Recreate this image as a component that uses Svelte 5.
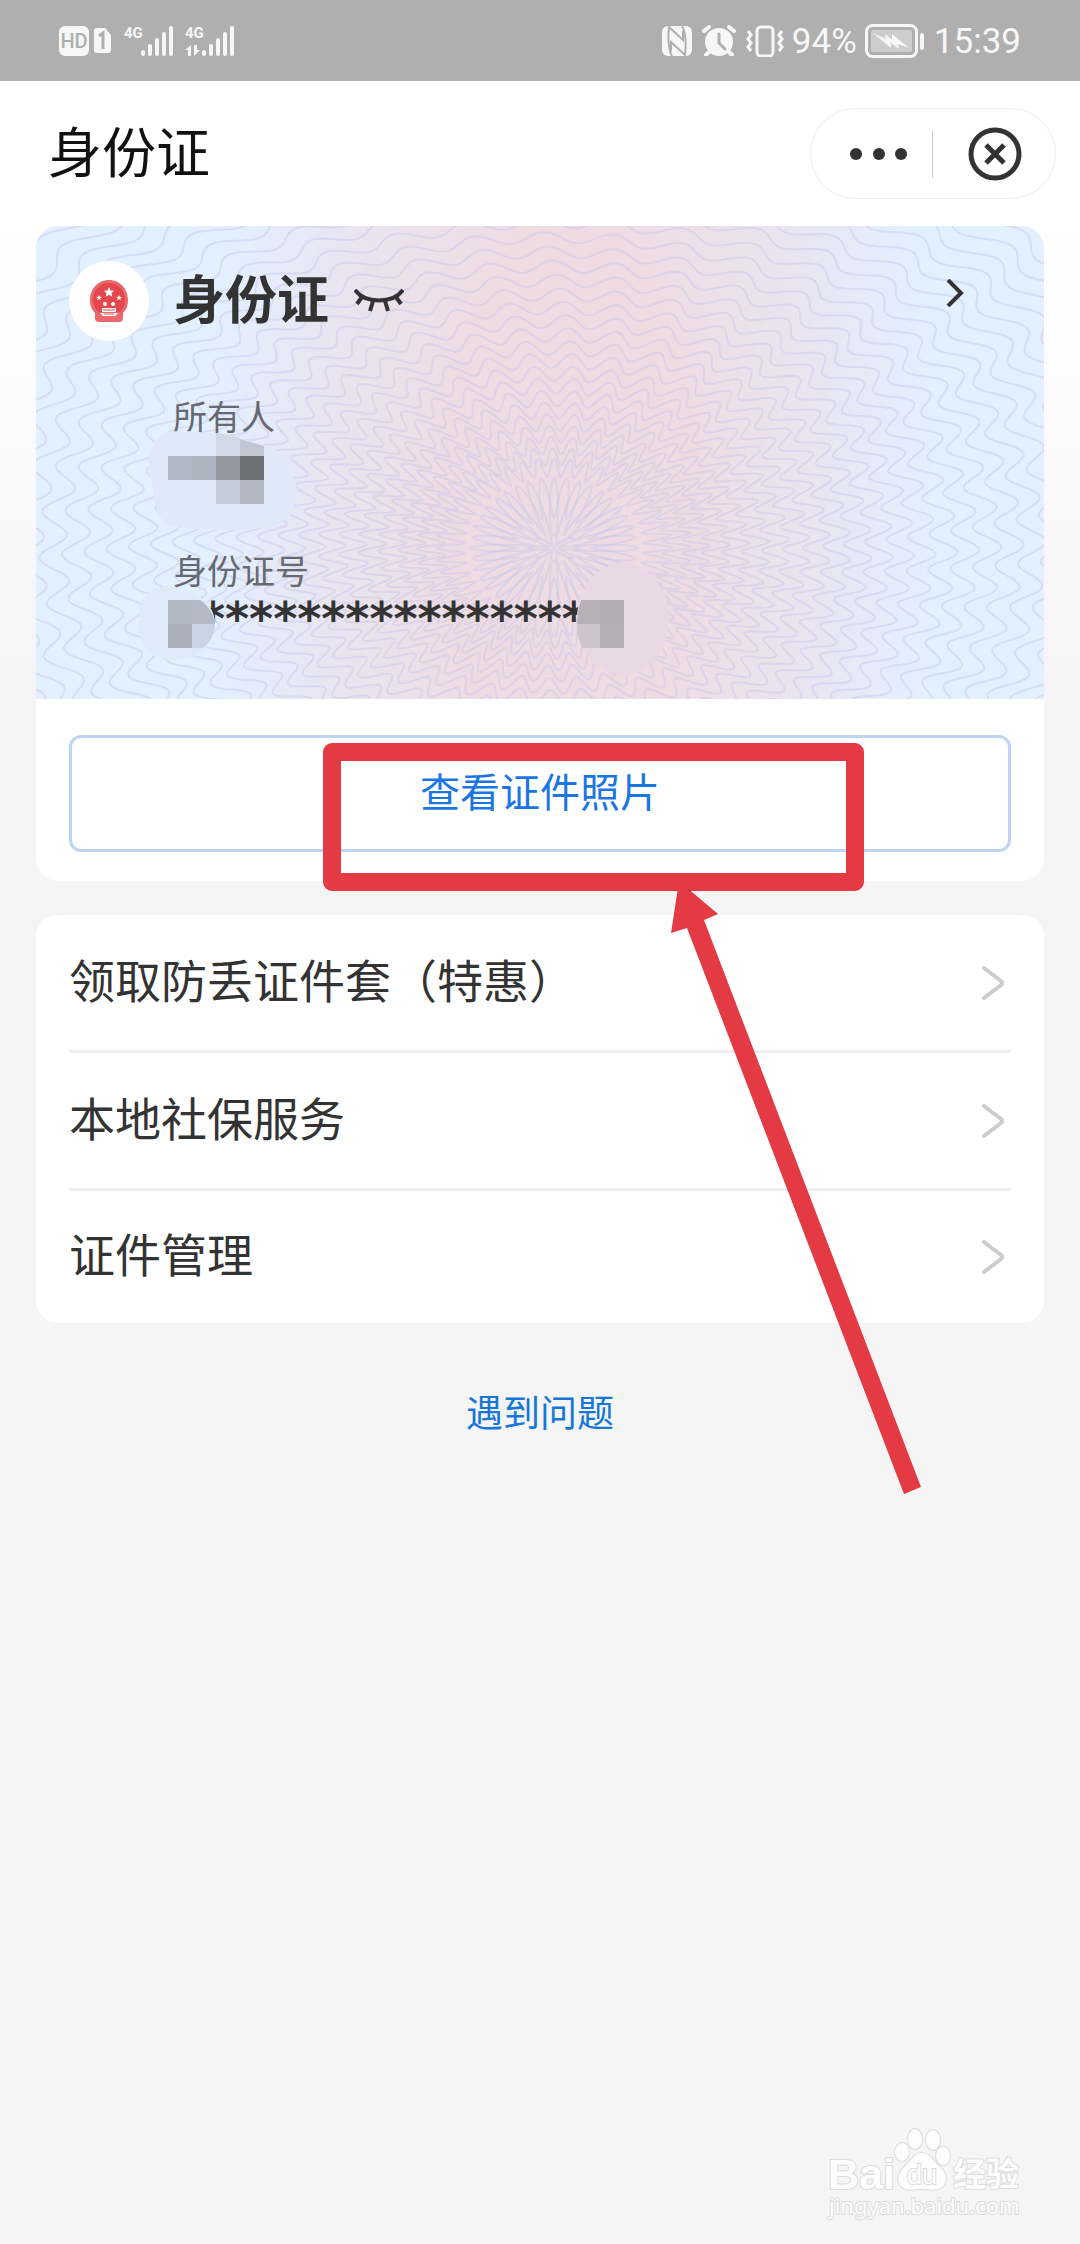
<!--
    App.svelte

    ID card detail screen: status bar, mini-program header, card face,
    service list, and the red pointer drawn over the photo button.
-->
<script lang="ts">
    type Ring = { rx: number; ry: number; ampX: number; ampY: number; waves: number; phase: number };

    const services = ['领取防丢证件套（特惠）', '本地社保服务', '证件管理'];
    const barHeights = [6, 12, 18, 24, 30];
    const maskedId = '*'.repeat(16);

    // One closed wavy line of the guilloche, centred on the rosette.
    function ringPath({ rx, ry, ampX, ampY, waves, phase }: Ring): string {
        const steps = waves * 12;
        let d = '';
        for (let i = 0; i < steps; i++) {
            const t = (i / steps) * Math.PI * 2;
            const wave = Math.cos(waves * t + phase);
            const x = 518 + Math.cos(t) * (rx + ampX * wave);
            const y = 322 + Math.sin(t) * (ry + ampY * wave);
            d += `${i ? 'L' : 'M'}${x.toFixed(1)} ${y.toFixed(1)}`;
        }
        return d + 'Z';
    }

    const rings: string[] = [
        ringPath({ rx: 15, ry: 8, ampX: 11, ampY: 6, waves: 8, phase: 0 }),
        ringPath({ rx: 52, ry: 42, ampX: 32, ampY: 28, waves: 20, phase: 0 }),
        ringPath({ rx: 60, ry: 50, ampX: 22, ampY: 20, waves: 20, phase: Math.PI }),
    ];
    for (let k = 0; k < 32; k++) {
        rings.push(ringPath({
            rx: 104 + k * 19 + k * k * 0.1,
            ry: 80 + k * 11 + k * k * 0.1,
            ampX: 14,
            ampY: 9 - Math.min(k, 20) * 0.2,
            waves: 44,
            phase: k * 0.4,
        }));
    }
</script>

{#snippet signal(withData: boolean)}
    <span class="signal">
        <span class="signal-type">
            <span>4G</span>
            {#if withData}
                <svg width="16" height="11" viewBox="0 0 16 11" aria-hidden="true">
                    <path d="M0 5 6 0v11H3V5zM9 0v11l6-6h-3V0z" fill="currentColor" />
                </svg>
            {/if}
        </span>
        <span class="signal-bars">
            {#each barHeights as h}
                <i style="height: {h}px"></i>
            {/each}
        </span>
    </span>
{/snippet}

<div class="page">
    <div class="status-bar">
        <div class="status-left">
            <span class="hd">HD</span>
            <svg class="sim" width="17" height="25" viewBox="0 0 17 25" aria-hidden="true">
                <path d="M3 0h8l6 7v15a3 3 0 0 1-3 3H3a3 3 0 0 1-3-3V3a3 3 0 0 1 3-3z" fill="#f7f7f7" />
                <path d="M5 8 9 5v16" fill="none" stroke="#afafaf" stroke-width="3" />
            </svg>
            {@render signal(false)}
            {@render signal(true)}
        </div>
        <div class="status-right">
            <svg width="30" height="30" viewBox="0 0 30 30" aria-hidden="true">
                <rect width="30" height="30" rx="6" fill="#f7f7f7" />
                <path d="M10 30C6 23 6 9 7 1l14 13V5M20 0c4 7 4 20 3 29L9 16v9" fill="none" stroke="#afafaf" stroke-width="2" />
            </svg>
            <svg class="alarm" width="34" height="31" viewBox="0 0 34 31" aria-hidden="true">
                <circle cx="17" cy="17" r="14" fill="#f7f7f7" />
                <path d="m2 6 5-4M32 6l-5-4M4 30l4-4M30 30l-4-4" stroke="#f7f7f7" stroke-width="4" stroke-linecap="round" />
                <path d="M17 9v9l6 6" fill="none" stroke="#afafaf" stroke-width="3" stroke-linecap="round" />
            </svg>
            <svg class="vibrate" width="38" height="32" viewBox="0 0 38 32" fill="none" stroke="#f7f7f7" stroke-width="3" aria-hidden="true">
                <rect x="11" y="2" width="16" height="29" rx="4" />
                <path d="m2 6 3 4-3 4 3 4-3 4 3 4M36 6l-3 4 3 4-3 4 3 4-3 4" />
            </svg>
            <span class="percent">94%</span>
            <svg class="battery" width="59" height="34" viewBox="0 0 59 34" aria-hidden="true">
                <rect x="1.5" y="1.5" width="50" height="31" rx="6" fill="none" stroke="#f7f7f7" stroke-width="3" />
                <rect x="6" y="6" width="41" height="22" rx="2" fill="#cdcdcd" />
                <path d="m8 9 13 6-1-5 7 6V10l17 14-11-4 1 5-8-6v5z" fill="#f7f7f7" />
                <rect x="55" y="9" width="4" height="17" rx="2" fill="#f7f7f7" />
            </svg>
            <time>15:39</time>
        </div>
    </div>

    <header class="top-bar">
        <h1>身份证</h1>
        <div class="capsule">
            <button class="more" aria-label="更多">
                <svg width="58" height="12" viewBox="0 0 58 12" fill="#333">
                    <circle cx="6" cy="6" r="6" /><circle cx="29" cy="6" r="6" /><circle cx="51" cy="6" r="6" />
                </svg>
            </button>
            <button class="close" aria-label="关闭">
                <svg width="54" height="54" viewBox="0 0 54 54" fill="none" stroke="#333" stroke-width="5">
                    <circle cx="27" cy="27" r="24" />
                    <path d="m18 18 18 18M36 18 18 36" />
                </svg>
            </button>
        </div>
    </header>

    <main>
        <section class="card">
            <div class="face">
                <svg class="pattern" viewBox="0 0 1008 473" preserveAspectRatio="xMidYMid slice" aria-hidden="true">
                    {#each rings as d}
                        <path {d} />
                    {/each}
                </svg>

                <div class="face-head">
                    <span class="emblem">
                        <svg width="38" height="42" viewBox="0 0 38 42" aria-hidden="true">
                            <path d="M19 0c11 0 19 9 19 20 0 6-2 10-5 13v5c0 3-2 4-4 4H9c-2 0-4-1-4-4v-5c-3-3-5-7-5-13C0 9 8 0 19 0z" fill="#e9686b" />
                            <path d="M19 3c9 0 16 7 16 17 0 5-2 9-5 12H8c-3-3-5-7-5-12C3 10 10 3 19 3z" fill="#e4484e" />
                            <path d="m19 7 1.500 3.400 3.700.3-2.800 2.400.9 3.600-3.300-1.900-3.300 1.900.9-3.600-2.800-2.400 3.700-.3z" fill="#fff" />
                            <path d="m9 15 .8 1.800 2 .1-1.600 1.300.6 2L9 19l-1.800 1.200.6-2-1.600-1.300 2-.1zM29 15l.8 1.800 2 .1-1.600 1.300.6 2L29 19l-1.800 1.200.6-2-1.600-1.300 2-.1z" fill="#fff" />
                            <circle cx="15" cy="24" r="2" fill="#fff" /><circle cx="23" cy="24" r="2" fill="#fff" />
                            <path d="M12 28h14v4H12zM10 33h18l-3 3H13z" fill="#fff" />
                            <path d="M13 30h12M14 34h10" stroke="#e4484e" />
                        </svg>
                    </span>
                    <h2>身份证</h2>
                    <button class="eye" aria-label="显示证件信息">
                        <svg width="50" height="26" viewBox="0 0 50 26" fill="none" stroke="#333">
                            <path d="M1 2c10 14 38 14 48 0" stroke-width="4" />
                            <path d="m8 9-5 7M19 13l-3 10M31 13l3 10M42 9l5 7" stroke-width="4" />
                        </svg>
                    </button>
                    <button class="detail" aria-label="证件详情">
                        <svg width="20" height="28" viewBox="0 0 20 28" fill="none" stroke="#333" stroke-width="4">
                            <path d="m3 1 13 13L3 27" />
                        </svg>
                    </button>
                </div>

                <dl>
                    <dt>所有人</dt>
                    <dd class="owner">
                        <svg class="mask mask-owner" width="152" height="102" viewBox="0 0 152 102" aria-hidden="true">
                            <path d="M18 3C40-3 85 6 120 16c18 6 26 20 28 35 4 20-2 32-14 42-18 10-90 8-112 2C8 90 8 65 3 45-2 25 6 10 18 3z" fill="#e0e9f8" />
                            <path d="M69 3c10 1 18 3 24 5v18H69z" fill="#d0d9e5" />
                            <path d="M93 9l24 7v10H93z" fill="#c0c7d3" />
                            <path d="M21 26h24v24H21z" fill="#b0b9c5" />
                            <path d="M45 26h24v24H45z" fill="#acb4bf" />
                            <path d="M69 26h24v24H69z" fill="#92979f" />
                            <path d="M93 26h24v24H93z" fill="#707077" />
                            <path d="M69 50h24v24H69z" fill="#c5ccd9" />
                            <path d="M93 50h24v24H93z" fill="#b2b9c4" />
                        </svg>
                    </dd>
                    <dt>身份证号</dt>
                    <dd class="number">
                        <span>{maskedId}</span>
                        <svg class="mask mask-first" width="78" height="74" viewBox="0 0 78 74" aria-hidden="true">
                            <path d="M30 0c20 3 45 12 47 36 0 16-8 28-20 34-16 5-40 5-50-8C0 50-2 26 6 12 12 4 20 0 30 0z" fill="#dfebf9" />
                            <path d="M30 14h24v24H30z" fill="#b1bac4" />
                            <path d="M54 14h8c8 5 14 14 15 24H54z" fill="#b3bac6" />
                            <path d="M30 38h24v24H30z" fill="#a9b0bb" />
                            <path d="M54 38h23c0 10-5 18-12 24H54z" fill="#c9d4e2" />
                        </svg>
                        <svg class="mask mask-last" width="92" height="114" viewBox="0 0 92 114" aria-hidden="true">
                            <ellipse cx="46" cy="57" rx="46" ry="56" fill="#e8d9e4" />
                            <path d="M4 38h19v24H0c0-9 2-17 4-24z" fill="#b9afb8" />
                            <path d="M23 38h24v24H23z" fill="#b3abb3" />
                            <path d="M0 62h23v24H5c-3-7-5-15-5-24z" fill="#cec4ce" />
                            <path d="M23 62h24v24H23z" fill="#b7adb6" />
                        </svg>
                    </dd>
                </dl>
            </div>
            <div class="card-action">
                <button class="photo">查看证件照片</button>
            </div>
        </section>

        <ul class="services">
            {#each services as name}
                <li>
                    <a href="#service">
                        <span>{name}</span>
                        <svg width="24" height="34" viewBox="0 0 24 34" fill="none" stroke="#ccc" stroke-width="4" stroke-linecap="round" stroke-linejoin="round" aria-hidden="true">
                            <path d="m3 2 17 13q2 2 0 4L3 32" />
                        </svg>
                    </a>
                </li>
            {/each}
        </ul>

        <a class="help" href="#help">遇到问题</a>
    </main>

    <svg class="pointer" width="600" height="754" viewBox="0 0 600 754" aria-hidden="true">
        <path fill-rule="evenodd" d="M9 0h523a9 9 0 0 1 9 9v130a9 9 0 0 1-9 9H9a9 9 0 0 1-9-9V9a9 9 0 0 1 9-9zM18 18v112h505V18z" />
        <path d="m356 138 39 33-14 6 217 567-17 7-217-566-16 5z" />
    </svg>

    <footer>
        <svg width="204" height="104" viewBox="0 0 204 104" role="img" aria-label="Baidu 经验">
            <g fill="#fdfdfd" stroke="#dcdcdc" stroke-width="2" paint-order="stroke">
                <text x="8" y="69" class="wm-bai">Bai</text>
                <ellipse cx="95" cy="19" rx="7" ry="10" />
                <ellipse cx="113" cy="20" rx="7" ry="10" />
                <ellipse cx="82" cy="32" rx="7" ry="9" />
                <ellipse cx="123" cy="36" rx="7" ry="9" />
                <path d="M102 33c8 0 11 8 17 13 7 6 9 13 5 19-5 7-14 4-22 4s-17 3-22-4c-4-6-1-13 5-19 6-5 9-13 17-13z" />
                <text x="87" y="64" class="wm-du">du</text>
                <text x="133" y="66" class="wm-cn">经验</text>
                <text x="9" y="94" class="wm-url">jingyan.baidu.com</text>
            </g>
        </svg>
    </footer>
</div>

<style>
    :global(body) {
        background: #f5f5f5;
    }

    .page {
        position: relative;
        display: flex;
        flex-direction: column;
        min-height: 100vh;
        overflow: hidden;
        background: linear-gradient(#fff 226px, #f5f5f5 700px);
        color: #333;
        font-family: "Noto Sans CJK SC", sans-serif;
    }

    h1, h2, dl, dd, ul {
        margin: 0;
        padding: 0;
    }

    svg {
        display: block;
        flex: none;
    }

    button {
        padding: 0;
        border: 0;
        background: none;
        color: inherit;
        font: inherit;
    }

    a {
        color: inherit;
        text-decoration: none;
    }

    .status-bar {
        display: flex;
        justify-content: space-between;
        align-items: center;
        height: 81px;
        padding: 0 59px;
        background: #afafaf;
        color: #f7f7f7;
        font-family: Roboto, sans-serif;
    }

    .status-left,
    .status-right {
        display: flex;
        align-items: center;
    }

    .hd {
        width: 30px;
        border-radius: 6px;
        background: #f7f7f7;
        color: #afafaf;
        font-size: 20px;
        font-weight: 500;
        line-height: 30px;
        text-align: center;
    }

    .sim {
        margin: 0 13px 0 5px;
    }

    .signal {
        display: flex;
        height: 31px;
        margin-right: 12px;
    }

    .signal-type {
        display: flex;
        flex-direction: column;
        justify-content: space-between;
        width: 17px;
        font-size: 15px;
        font-weight: 700;
        line-height: 16px;
    }

    .signal-bars {
        display: flex;
        align-items: flex-end;
        gap: 3px;
    }

    .signal-bars i {
        width: 4px;
        border-radius: 2px;
        background: currentColor;
    }

    .status-right {
        font-size: 35px;
        line-height: 40px;
    }

    .alarm {
        margin: 0 10px;
    }

    .percent {
        margin: 2px 8px 0;
    }

    .status-right time {
        margin: 2px 0 0 10px;
    }

    .top-bar {
        display: flex;
        justify-content: space-between;
        align-items: center;
        height: 145px;
        padding: 0 24px 0 48px;
    }

    h1 {
        padding-bottom: 8px;
        color: #111;
        font-size: 54px;
        font-weight: 400;
        line-height: 80px;
    }

    .capsule {
        display: flex;
        align-items: center;
        box-sizing: border-box;
        width: 246px;
        height: 91px;
        border: 1px solid #eee;
        border-radius: 46px;
    }

    .capsule button {
        display: flex;
        align-items: center;
        justify-content: flex-end;
        height: 48px;
    }

    .more {
        width: 122px;
        padding-right: 24px;
        border-right: 1px solid #ccc;
    }

    .close {
        width: 89px;
    }

    main {
        display: flex;
        flex-direction: column;
        gap: 34px;
        padding: 0 36px;
    }

    .card,
    .services {
        overflow: hidden;
        border-radius: 22px;
        background: #fff;
    }

    .face {
        position: relative;
        padding: 35px 33px 55px;
        background: radial-gradient(ellipse 36% 180% at 53% 60%, #efdce3 35%, #e9e5f1 68%, #e3f0ff);
    }

    .pattern {
        position: absolute;
        inset: 0;
        width: 100%;
        height: 100%;
        fill: none;
        stroke: #c3c4ec;
        stroke-opacity: 0.4;
        stroke-width: 2;
    }

    .face-head {
        position: relative;
        display: flex;
        align-items: center;
        height: 80px;
    }

    .emblem {
        display: grid;
        place-items: center;
        width: 80px;
        height: 80px;
        margin-right: 24px;
        border-radius: 50%;
        background: #fff;
    }

    h2 {
        padding-bottom: 8px;
        font-size: 52px;
        font-weight: 700;
        line-height: 72px;
    }

    .eye {
        margin-left: 25px;
    }

    .detail {
        margin: 0 46px 16px auto;
    }

    dl {
        position: relative;
        padding: 51px 0 0 104px;
    }

    dt {
        color: #666a70;
        font-size: 34px;
        line-height: 48px;
    }

    dd {
        position: relative;
    }

    .owner {
        height: 106px;
    }

    .number {
        padding-left: 28px;
        font-family: "DejaVu Sans", sans-serif;
        font-size: 46px;
        font-weight: 700;
        line-height: 50px;
    }

    .mask {
        position: absolute;
    }

    .mask-owner {
        top: -10px;
        left: -26px;
    }

    .mask-first {
        top: -8px;
        left: -35px;
    }

    .mask-last {
        top: -32px;
        left: 404px;
    }

    .card-action {
        padding: 36px 33px 29px;
    }

    .photo {
        width: 100%;
        height: 117px;
        padding-bottom: 8px;
        border: 3px solid #bdd5f0;
        border-radius: 12px;
        color: #1c76e2;
        font-size: 40px;
    }

    .services {
        list-style: none;
    }

    .services li {
        margin: 0 33px;
        border-bottom: 3px solid #eee;
    }

    .services li:last-child {
        border-bottom: 0;
    }

    .services a {
        display: flex;
        justify-content: space-between;
        align-items: center;
        height: 135px;
        padding-right: 6px;
        font-size: 46px;
    }

    .services span {
        padding-bottom: 10px;
    }

    .services li:last-child a {
        height: 132px;
    }

    .help {
        align-self: center;
        margin-top: 24px;
        color: #1677d9;
        font-size: 37px;
        line-height: 60px;
    }

    .pointer {
        position: absolute;
        top: 743px;
        left: 323px;
        fill: #e33a44;
        pointer-events: none;
    }

    footer {
        display: flex;
        justify-content: flex-end;
        margin-top: auto;
        padding: 0 56px 20px;
    }

    .wm-bai {
        font: 700 43px "Liberation Sans", sans-serif;
    }

    .wm-du {
        font: 400 27px "Liberation Sans", sans-serif;
    }

    .wm-cn {
        font: 700 33px "Noto Sans CJK SC", sans-serif;
    }

    .wm-url {
        font: 400 22px "Noto Sans", sans-serif;
    }
</style>
